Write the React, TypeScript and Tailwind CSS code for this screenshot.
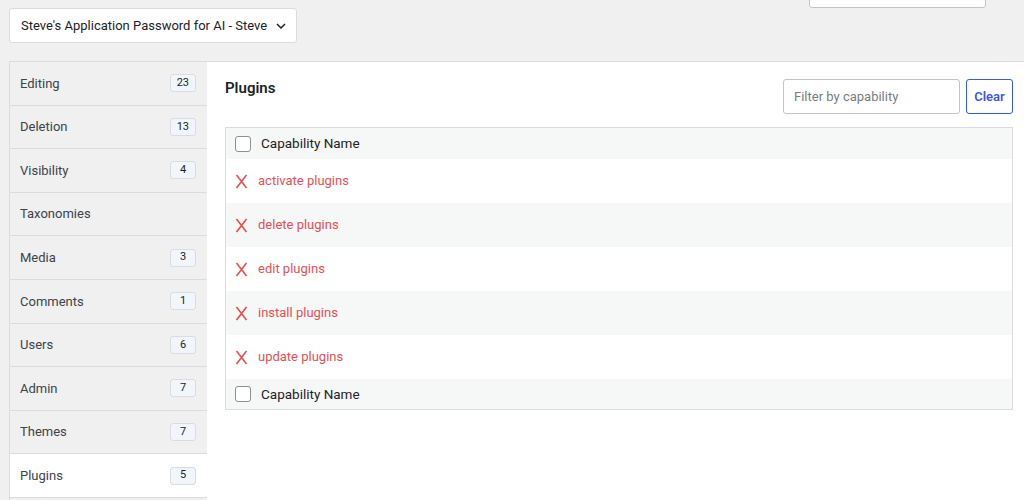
import React from "react";

const groups: { name: string; count?: number; active?: boolean }[] = [
  { name: "Editing", count: 23 },
  { name: "Deletion", count: 13 },
  { name: "Visibility", count: 4 },
  { name: "Taxonomies" },
  { name: "Media", count: 3 },
  { name: "Comments", count: 1 },
  { name: "Users", count: 6 },
  { name: "Admin", count: 7 },
  { name: "Themes", count: 7 },
  { name: "Plugins", count: 5, active: true },
  { name: "" },
];

const caps = ["activate plugins", "delete plugins", "edit plugins", "install plugins", "update plugins"];

function Cross() {
  return (
    <svg width="13" height="15" viewBox="0 0 13 15" className="shrink-0">
      <path d="M1.5 1 L11.5 14 M11.5 1 L1.5 14" stroke="#e65054" strokeWidth="1.6" fill="none" />
    </svg>
  );
}

function Checkbox() {
  return <span className="block w-4 h-4 rounded-[3px] border border-[#8c8f94] bg-white shrink-0" />;
}

export default function App() {
  return (
    <div className="w-[1024px] h-[500px] overflow-hidden bg-[#f0f0f1] text-[13px] text-[#1d2327]" style={{ fontFamily: "Roboto, 'Noto Sans', sans-serif" }}>
      <div className="relative h-[61px]">
        <div className="absolute left-[809px] -top-[2px] w-[177px] h-[10px] bg-white border border-[#c3c4c7] rounded-[3px]" />
        <div className="absolute left-[9px] top-[8px] w-[288px] h-[35px] bg-white border border-[#dcdcde] rounded-[3px] flex items-center pl-[11px] pr-[10px] justify-between">
          <span className="text-[13px] text-[#1d2327] whitespace-nowrap">Steve's Application Password for AI - Steve</span>
          <svg width="10" height="6" viewBox="0 0 10 6" className="shrink-0">
            <path d="M1 1 L5 5 L9 1" stroke="#1d2327" strokeWidth="1.5" fill="none" />
          </svg>
        </div>
      </div>
      <div className="flex border-t border-[#dcdcde] ml-[9px]">
        <div className="w-[198px] shrink-0 border-l border-[#dcdcde]">
          {groups.map((g, i) => (
            <div
              key={i}
              className={
                "h-[43.6px] flex items-center justify-between pl-[10px] pr-[11px] border-b border-[#dcdcde] " +
                (g.active ? "bg-white" : "bg-[#f0f0f0]")
              }
            >
              <span className="text-[13px] text-[#3c434a]">{g.name}</span>
              {g.count !== undefined && (
                <span className="min-w-[26px] h-[18px] px-[6px] flex items-center justify-center rounded-[3px] border border-[#dcdcde] bg-[#f0f6fc] text-[11px] text-[#1d2327]">
                  {g.count}
                </span>
              )}
            </div>
          ))}
        </div>
        <div className="flex-1 bg-white h-[440px] pl-[18px] pr-[11px] pt-[17px]">
          <div className="flex items-start justify-between">
            <h2 className="text-[15px] font-semibold text-[#1d2327] -mt-[2px]">Plugins</h2>
            <div className="flex gap-[6px]">
              <div className="w-[177px] h-[35px] border border-[#c3c4c7] rounded-[3px] flex items-center px-[10px] text-[13px] text-[#787c82]">
                Filter by capability
              </div>
              <div className="w-[47px] h-[35px] border border-[#3858e9] rounded-[3px] flex items-center justify-center text-[13px] font-semibold text-[#3858e9]">
                Clear
              </div>
            </div>
          </div>
          <div className="mt-[13px] border border-[#dcdcde] w-[788px]">
            <div className="h-[31px] bg-[#f6f7f7] flex items-center pl-[9px] gap-[10px]">
              <Checkbox />
              <span className="text-[13.5px] text-[#1d2327]">Capability Name</span>
            </div>
            {caps.map((c, i) => (
              <div key={c} className={"h-[44px] flex items-center pl-[9px] gap-[10px] " + (i % 2 === 1 ? "bg-[#f6f7f7]" : "bg-white")}>
                <Cross />
                <span className="text-[13px] text-[#e65054]">{c}</span>
              </div>
            ))}
            <div className="h-[30px] bg-[#f6f7f7] flex items-center pl-[9px] gap-[10px]">
              <Checkbox />
              <span className="text-[13.5px] text-[#1d2327]">Capability Name</span>
            </div>
          </div>
        </div>
      </div>
    </div>
  );
}
